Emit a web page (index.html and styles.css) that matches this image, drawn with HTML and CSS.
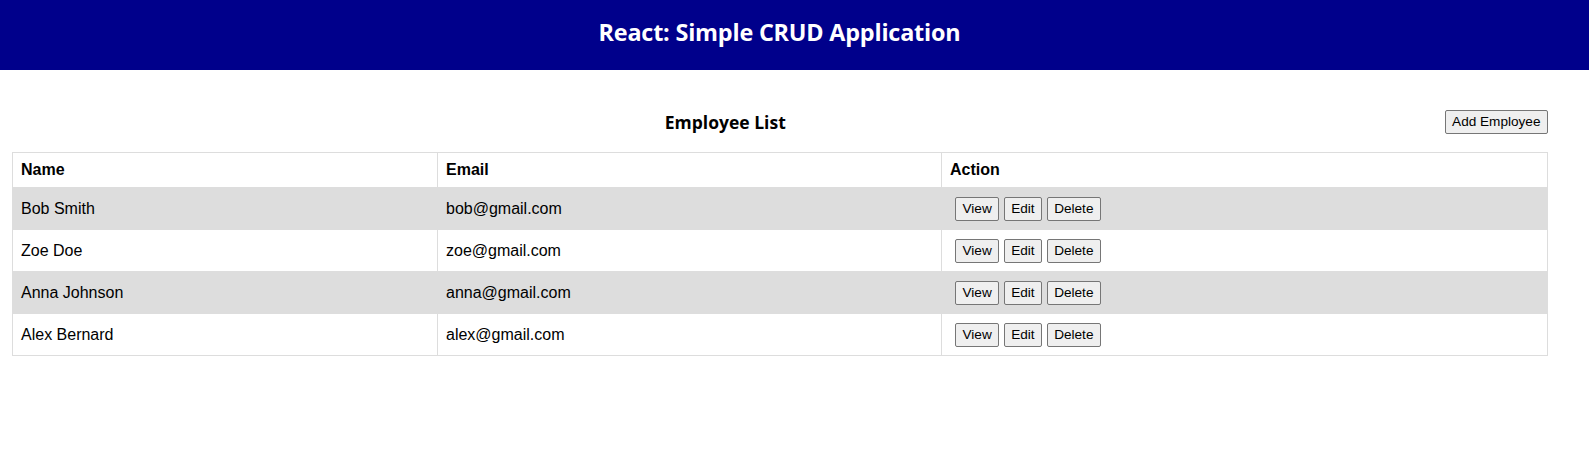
FILE: index.html
```html
<!DOCTYPE html>
<html>
<head>
<meta charset="utf-8">
<link rel="stylesheet" href="styles.css">
</head>
<body>
<header class="app-header">
  <h1 class="app-title">React: Simple CRUD Application</h1>
</header>
<main class="content">
  <div class="list-head">
    <h2 class="list-title">Employee List</h2>
    <button class="btn">Add Employee</button>
  </div>
  <table class="emp-table">
    <thead>
      <tr><th class="col-name">Name</th><th class="col-email">Email</th><th>Action</th></tr>
    </thead>
    <tbody>
      <tr><td>Bob Smith</td><td>bob@gmail.com</td><td><div class="actions"><button class="btn">View</button><button class="btn">Edit</button><button class="btn">Delete</button></div></td></tr>
      <tr><td>Zoe Doe</td><td>zoe@gmail.com</td><td><div class="actions"><button class="btn">View</button><button class="btn">Edit</button><button class="btn">Delete</button></div></td></tr>
      <tr><td>Anna Johnson</td><td>anna@gmail.com</td><td><div class="actions"><button class="btn">View</button><button class="btn">Edit</button><button class="btn">Delete</button></div></td></tr>
      <tr><td>Alex Bernard</td><td>alex@gmail.com</td><td><div class="actions"><button class="btn">View</button><button class="btn">Edit</button><button class="btn">Delete</button></div></td></tr>
    </tbody>
  </table>
</main>
</body>
</html>
```

FILE: styles.css
```css
html, body {
  margin: 0;
  padding: 0;
  background: #fff;
}
body {
  font-family: "Liberation Sans", Arial, sans-serif;
  font-size: 16px;
  color: #000;
}
.app-header {
  background: #00008b;
  height: 70px;
  display: flex;
  align-items: center;
  justify-content: center;
}
.app-title {
  margin: 0 0 6px 0;
  color: #fff;
  font-family: "Open Sans", "Noto Sans", sans-serif;
  font-weight: 700;
  font-size: 23.4px;
  letter-spacing: -0.2px;
  transform: translateX(-15px);
}
.content {
  padding: 0 41px 0 12px;
}
.list-head {
  display: flex;
  align-items: center;
  margin-top: 40px;
  height: 24px;
  margin-bottom: 18px;
}
.list-title {
  flex: 1;
  margin: 0;
  text-align: center;
  font-family: "Open Sans", "Noto Sans", sans-serif;
  font-weight: 700;
  font-size: 17.5px;
  padding-right: 6px;
}
.btn {
  font-family: "Liberation Sans", Arial, sans-serif;
  font-size: 13.6px;
  color: #000;
  background: #efefef;
  border: 1px solid #767676;
  border-radius: 2px;
  padding: 0 6.5px;
  height: 24px;
  line-height: 22px;
}
.emp-table {
  width: 100%;
  border-collapse: collapse;
  border: 1px solid #ddd;
}
.emp-table th, .emp-table td {
  border: 1px solid #ddd;
  text-align: left;
  padding: 8px;
  line-height: 18px;
}
.emp-table th {
  font-weight: 700;
}
.emp-table td {
  height: 25px;
}
.col-name { width: 408px; }
.col-email { width: 487px; }
.emp-table tbody tr:nth-child(odd) {
  background: #ddd;
}
.actions {
  display: flex;
  gap: 4.5px;
  padding-left: 5px;
}
```
